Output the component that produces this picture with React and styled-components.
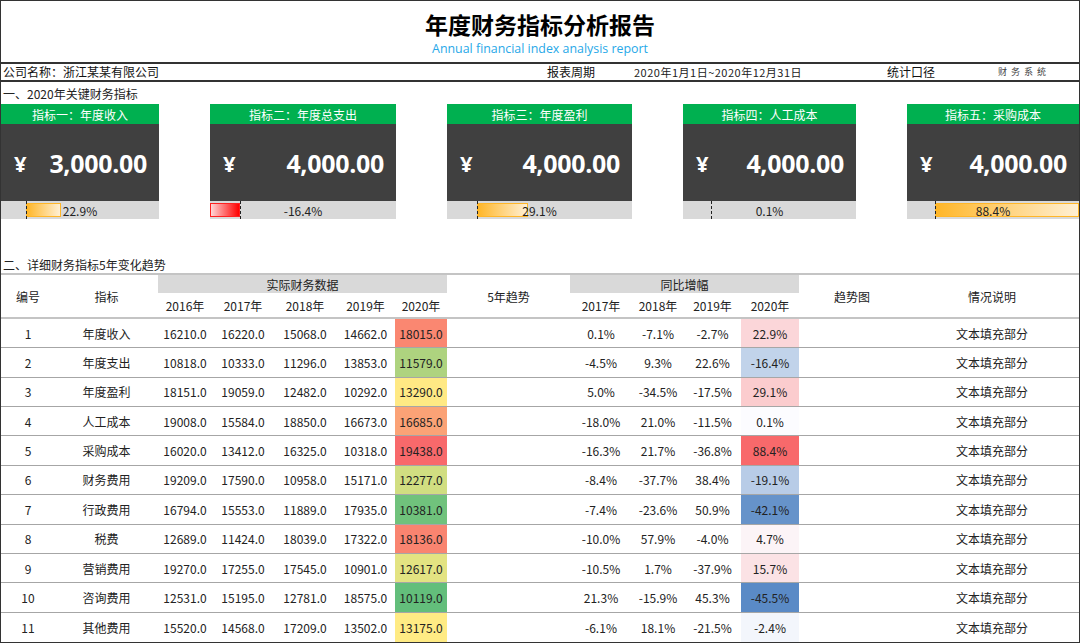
import React from 'react';
import styled, { createGlobalStyle } from 'styled-components';

const GlobalStyle = createGlobalStyle`
  html, body {
    margin: 0;
    padding: 0;
    background: #ffffff;
  }
  body {
    font-family: "Microsoft YaHei", "Noto Sans CJK SC", "Noto Sans", sans-serif;
    color: #222;
  }
  * {
    box-sizing: border-box;
  }
`;

// column template shared by the table header and rows
const COLS = '54px 103px 54px 62px 62px 59px 52px 123px 62px 52px 57px 58px 106px 1fr';

const cards = [
  { title: '指标一：年度收入', value: '3,000.00', pct: 22.9, width: 158 },
  { title: '指标二：年度总支出', value: '4,000.00', pct: -16.4, width: 186 },
  { title: '指标三：年度盈利', value: '4,000.00', pct: 29.1, width: 185 },
  { title: '指标四：人工成本', value: '4,000.00', pct: 0.1, width: 173 },
  { title: '指标五：采购成本', value: '4,000.00', pct: 88.4, width: 172 },
];

const rows = [
  [1, '年度收入', 16210, 16220, 15068, 14662, 18015, 0.1, -7.1, -2.7, 22.9],
  [2, '年度支出', 10818, 10333, 11296, 13853, 11579, -4.5, 9.3, 22.6, -16.4],
  [3, '年度盈利', 18151, 19059, 12482, 10292, 13290, 5.0, -34.5, -17.5, 29.1],
  [4, '人工成本', 19008, 15584, 18850, 16673, 16685, -18.0, 21.0, -11.5, 0.1],
  [5, '采购成本', 16020, 13412, 16325, 10318, 19438, -16.3, 21.7, -36.8, 88.4],
  [6, '财务费用', 19209, 17590, 10958, 15171, 12277, -8.4, -37.7, 38.4, -19.1],
  [7, '行政费用', 16794, 15553, 11889, 17935, 10381, -7.4, -23.6, 50.9, -42.1],
  [8, '税费', 12689, 11424, 18039, 17322, 18136, -10.0, 57.9, -4.0, 4.7],
  [9, '营销费用', 19270, 17255, 17545, 10901, 12617, -10.5, 1.7, -37.9, 15.7],
  [10, '咨询费用', 12531, 15195, 12781, 18575, 10119, 21.3, -15.9, 45.3, -45.5],
  [11, '其他费用', 15520, 14568, 17209, 13502, 13175, -6.1, 18.1, -21.5, -2.4],
];

// three colour scale like the spreadsheet's conditional format
const mix = (a, b, t) => a.map((v, i) => Math.round(v + (b[i] - v) * t));
const scale3 = (v, min, mid, max, lo, md, hi) => {
  const c = v <= mid
    ? mix(lo, md, (v - min) / (mid - min))
    : mix(md, hi, (v - mid) / (max - mid));
  return `rgb(${c.join(',')})`;
};
const GREEN = [99, 190, 123];
const YELLOW = [255, 235, 132];
const RED = [248, 105, 107];
const BLUE = [90, 138, 198];
const WHITE = [252, 252, 255];

const heat = v => scale3(v, 10119, 13175, 19438, GREEN, YELLOW, RED);
const growth = v => scale3(v, -45.5, 0.1, 88.4, BLUE, WHITE, RED);

const KpiBar = ({ pct }) => {
  const axis = 16;
  const barStyle = pct >= 0
    ? { left: `${axis}%`, width: `${(pct / 88.4) * (100 - axis)}%` }
    : { left: `${axis - Math.min(1, -pct / 16.4) * axis}%`, width: `${Math.min(1, -pct / 16.4) * axis}%` };
  return (
    <CardFoot>
      {Math.abs(pct) > 0.5 && <Bar $neg={pct < 0} style={barStyle} />}
      <Axis style={{ left: `${axis}%` }} />
      <FootLabel>{pct.toFixed(1)}%</FootLabel>
    </CardFoot>
  );
};

const App = () => {
  return (
    <>
      <GlobalStyle />
      <Sheet>
        <TitleBlock>
          <Title>年度财务指标分析报告</Title>
          <Subtitle>Annual financial index analysis report</Subtitle>
        </TitleBlock>

        <InfoRow>
          <span>公司名称：浙江某某有限公司</span>
          <span>报表周期</span>
          <DateText>2020年1月1日~2020年12月31日</DateText>
          <span>统计口径</span>
          <SystemText>财务系统</SystemText>
        </InfoRow>

        <SectionTitle>一、2020年关键财务指标</SectionTitle>

        <CardRow>
          {cards.map(c => (
            <Card key={c.title} $width={c.width}>
              <CardHead>{c.title}</CardHead>
              <CardBody>
                <Yen>¥</Yen>
                <Amount>{c.value}</Amount>
              </CardBody>
              <KpiBar pct={c.pct} />
            </Card>
          ))}
        </CardRow>

        <SectionTitle $spaced>二、详细财务指标5年变化趋势</SectionTitle>

        <TableHead>
          <HeadCell $col={1} $row={1} $rows={2}>编号</HeadCell>
          <HeadCell $col={2} $row={1} $rows={2}>指标</HeadCell>
          <HeadCell $col={3} $row={1} $span={5} $shaded>实际财务数据</HeadCell>
          {['2016年', '2017年', '2018年', '2019年', '2020年'].map((y, i) => (
            <HeadCell key={y} $col={3 + i} $row={2}>{y}</HeadCell>
          ))}
          <HeadCell $col={8} $row={1} $rows={2}>5年趋势</HeadCell>
          <HeadCell $col={9} $row={1} $span={4} $shaded>同比增幅</HeadCell>
          {['2017年', '2018年', '2019年', '2020年'].map((y, i) => (
            <HeadCell key={'g' + y} $col={9 + i} $row={2}>{y}</HeadCell>
          ))}
          <HeadCell $col={13} $row={1} $rows={2}>趋势图</HeadCell>
          <HeadCell $col={14} $row={1} $rows={2}>情况说明</HeadCell>
        </TableHead>

        <TableBody>
          {rows.map(r => (
            <Row key={r[0]}>
              <Cell>{r[0]}</Cell>
              <Cell>{r[1]}</Cell>
              {r.slice(2, 6).map((v, i) => <Cell key={i}>{v.toFixed(1)}</Cell>)}
              <Cell $bg={heat(r[6])}>{r[6].toFixed(1)}</Cell>
              <Cell />
              {r.slice(7, 10).map((v, i) => <Cell key={'p' + i}>{v.toFixed(1)}%</Cell>)}
              <Cell $bg={growth(r[10])}>{r[10].toFixed(1)}%</Cell>
              <Cell />
              <Cell>文本填充部分</Cell>
            </Row>
          ))}
        </TableBody>
      </Sheet>
    </>
  );
};

export default App;

// Styled components

const Sheet = styled.div`
  width: 1080px;
  height: 643px;
  border: 1px solid #333;
  display: flex;
  flex-direction: column;
  overflow: hidden;
`;

const TitleBlock = styled.div`
  height: 63px;
  border-bottom: 2px solid #333;
  display: flex;
  flex-direction: column;
  align-items: center;
  padding-top: 7px;
`;

const Title = styled.h1`
  margin: 0;
  font-size: 23px;
  line-height: 32px;
  font-weight: 700;
  color: #000;
`;

const Subtitle = styled.div`
  font-family: "Open Sans", "Noto Sans", sans-serif;
  font-size: 12.4px;
  line-height: 18px;
  color: #27a8e8;
`;

const InfoRow = styled.div`
  height: 18px;
  border-bottom: 2px solid #333;
  display: grid;
  grid-template-columns: 544px 87px 253px 111px 1fr;
  align-items: center;
  padding-left: 2px;
  font-size: 12px;
  line-height: 16px;
  color: #111;
`;

const DateText = styled.span`
  font-size: 11px;
  letter-spacing: 0.5px;
  color: #222;
`;

const SystemText = styled.span`
  font-size: 9px;
  letter-spacing: 4px;
  color: #444;
`;

const SectionTitle = styled.div`
  height: ${p => (p.$spaced ? '17px' : '22px')};
  margin-top: ${p => (p.$spaced ? '37px' : '0')};
  display: flex;
  align-items: center;
  padding-left: 2px;
  font-size: 12px;
  color: #222;
`;

const CardRow = styled.div`
  display: flex;
  gap: 51px;
`;

const Card = styled.div`
  width: ${p => p.$width}px;
  display: flex;
  flex-direction: column;
`;

const CardHead = styled.div`
  height: 20px;
  background: #00b050;
  color: #fff;
  font-size: 12px;
  display: flex;
  align-items: center;
  justify-content: center;
`;

const CardBody = styled.div`
  height: 77px;
  background: #404040;
  color: #fff;
  display: flex;
  align-items: center;
  justify-content: space-between;
  padding: 0 12px 0 13px;
`;

const Yen = styled.span`
  font-family: "Open Sans", "Noto Sans", sans-serif;
  font-size: 22px;
  font-weight: 700;
`;

const Amount = styled.span`
  font-family: "Open Sans", "Noto Sans", sans-serif;
  font-size: 25px;
  font-weight: 700;
  letter-spacing: -0.3px;
`;

const CardFoot = styled.div`
  position: relative;
  height: 18px;
  background: #d9d9d9;
  display: flex;
  align-items: center;
  justify-content: center;
`;

const Bar = styled.div`
  position: absolute;
  top: 2px;
  bottom: 2px;
  border: 1px solid ${p => (p.$neg ? '#ff2020' : '#ffb628')};
  background: ${p => (p.$neg
    ? 'linear-gradient(to right, #ffd6d6, #ff0000)'
    : 'linear-gradient(to right, #ffb628, #fff0d4)')};
`;

const Axis = styled.div`
  position: absolute;
  top: 0;
  bottom: 0;
  border-left: 1px dashed #222;
`;

const FootLabel = styled.span`
  position: relative;
  font-size: 12px;
  color: #222;
`;

const TableHead = styled.div`
  display: grid;
  grid-template-columns: ${COLS};
  grid-template-rows: 18px 24px;
  border-top: 2px solid #c4c4c4;
  border-bottom: 2px solid #c4c4c4;
`;

const HeadCell = styled.div`
  grid-column: ${p => p.$col} / span ${p => p.$span || 1};
  grid-row: ${p => p.$row} / span ${p => p.$rows || 1};
  display: flex;
  align-items: center;
  justify-content: center;
  background: ${p => (p.$shaded ? '#d9d9d9' : 'transparent')};
  font-size: 12px;
  color: #222;
`;

const TableBody = styled.div`
  flex: 1;
  display: grid;
  grid-auto-rows: 1fr;
`;

const Row = styled.div`
  display: grid;
  grid-template-columns: ${COLS};
  border-bottom: 1px solid #a6a6a6;

  &:last-child {
    border-bottom: none;
  }
`;

const Cell = styled.div`
  display: flex;
  align-items: center;
  justify-content: center;
  background: ${p => p.$bg || 'transparent'};
  font-size: 12px;
  color: #222;
`;
